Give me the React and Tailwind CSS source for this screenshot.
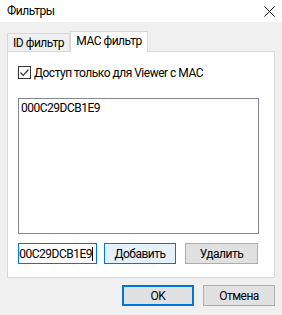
import React from "react";

const App = () => {
  return (
    <div
      className="w-[282px] h-[315px] bg-[#f0f0f0] text-[12px] tracking-[-0.5px] text-black overflow-hidden"
      style={{ fontFamily: 'Roboto, "Noto Sans", sans-serif' }}
    >
      {/* Title bar */}
      <div className="h-[22px] bg-white flex items-center justify-between pl-[7px] pr-[6px]">
        <span className="leading-none">Фильтры</span>
        <svg width="11" height="11" viewBox="0 0 11 11" className="mr-[1px]">
          <path d="M0.5 0.5 L10.5 10.5 M10.5 0.5 L0.5 10.5" stroke="#111" strokeWidth="1" />
        </svg>
      </div>

      <div className="px-[7px] pt-[9px]">
        {/* Tabs */}
        <div className="flex items-end h-[20px]">
          <div className="h-[18px] w-[63px] bg-[#f0f0f0] border border-b-0 border-[#d9d9d9] flex items-center justify-center leading-none">
            ID фильтр
          </div>
          <div className="relative z-10 h-[21px] w-[78px] -mb-px bg-white border border-b-0 border-[#d9d9d9] flex items-center justify-center leading-none pb-[2px]">
            MAC фильтр
          </div>
        </div>

        {/* Tab panel */}
        <div className="h-[227px] bg-white border border-[#d9d9d9] pl-[10px] pt-[14px]">
          <div className="flex items-center h-[13px]">
            <div className="w-[13px] h-[13px] border border-[#333] bg-white flex items-center justify-center">
              <svg width="11" height="11" viewBox="0 0 11 11">
                <path d="M1.5 5.5 L4.2 8.3 L9.5 2.5" fill="none" stroke="#333" strokeWidth="1.2" />
              </svg>
            </div>
            <span className="ml-[3px] leading-none">Доступ только для Viewer с MAC</span>
          </div>

          {/* List box */}
          <div className="mt-[19px] w-[241px] h-[136px] border border-[#828790] bg-white px-[2px] pt-[2px]">
            <div className="leading-[15px]">000C29DCB1E9</div>
          </div>

          {/* Input + buttons */}
          <div className="mt-[9px] flex items-center h-[21px]">
            <div className="w-[79px] h-[21px] border border-[#0078d7] bg-white overflow-hidden flex items-center justify-end pr-[3px]">
              <span className="whitespace-nowrap leading-none">000C29DCB1E9</span>
              <span className="w-px h-[14px] bg-black shrink-0"></span>
            </div>
            <button className="ml-[7px] w-[72px] h-[21px] border border-[#0078d7] bg-[#e5f1fb] leading-none">
              Добавить
            </button>
            <button className="ml-[9px] w-[73px] h-[21px] border border-[#adadad] bg-[#e1e1e1] leading-none">
              Удалить
            </button>
          </div>
        </div>

        {/* Footer buttons */}
        <div className="mt-[7px] flex justify-end">
          <button className="w-[72px] h-[21px] border-2 border-[#0078d7] bg-[#e1e1e1] leading-none">
            OK
          </button>
          <button className="ml-[9px] w-[72px] h-[21px] border border-[#adadad] bg-[#e1e1e1] leading-none">
            Отмена
          </button>
        </div>
      </div>
    </div>
  );
};

export default App;
